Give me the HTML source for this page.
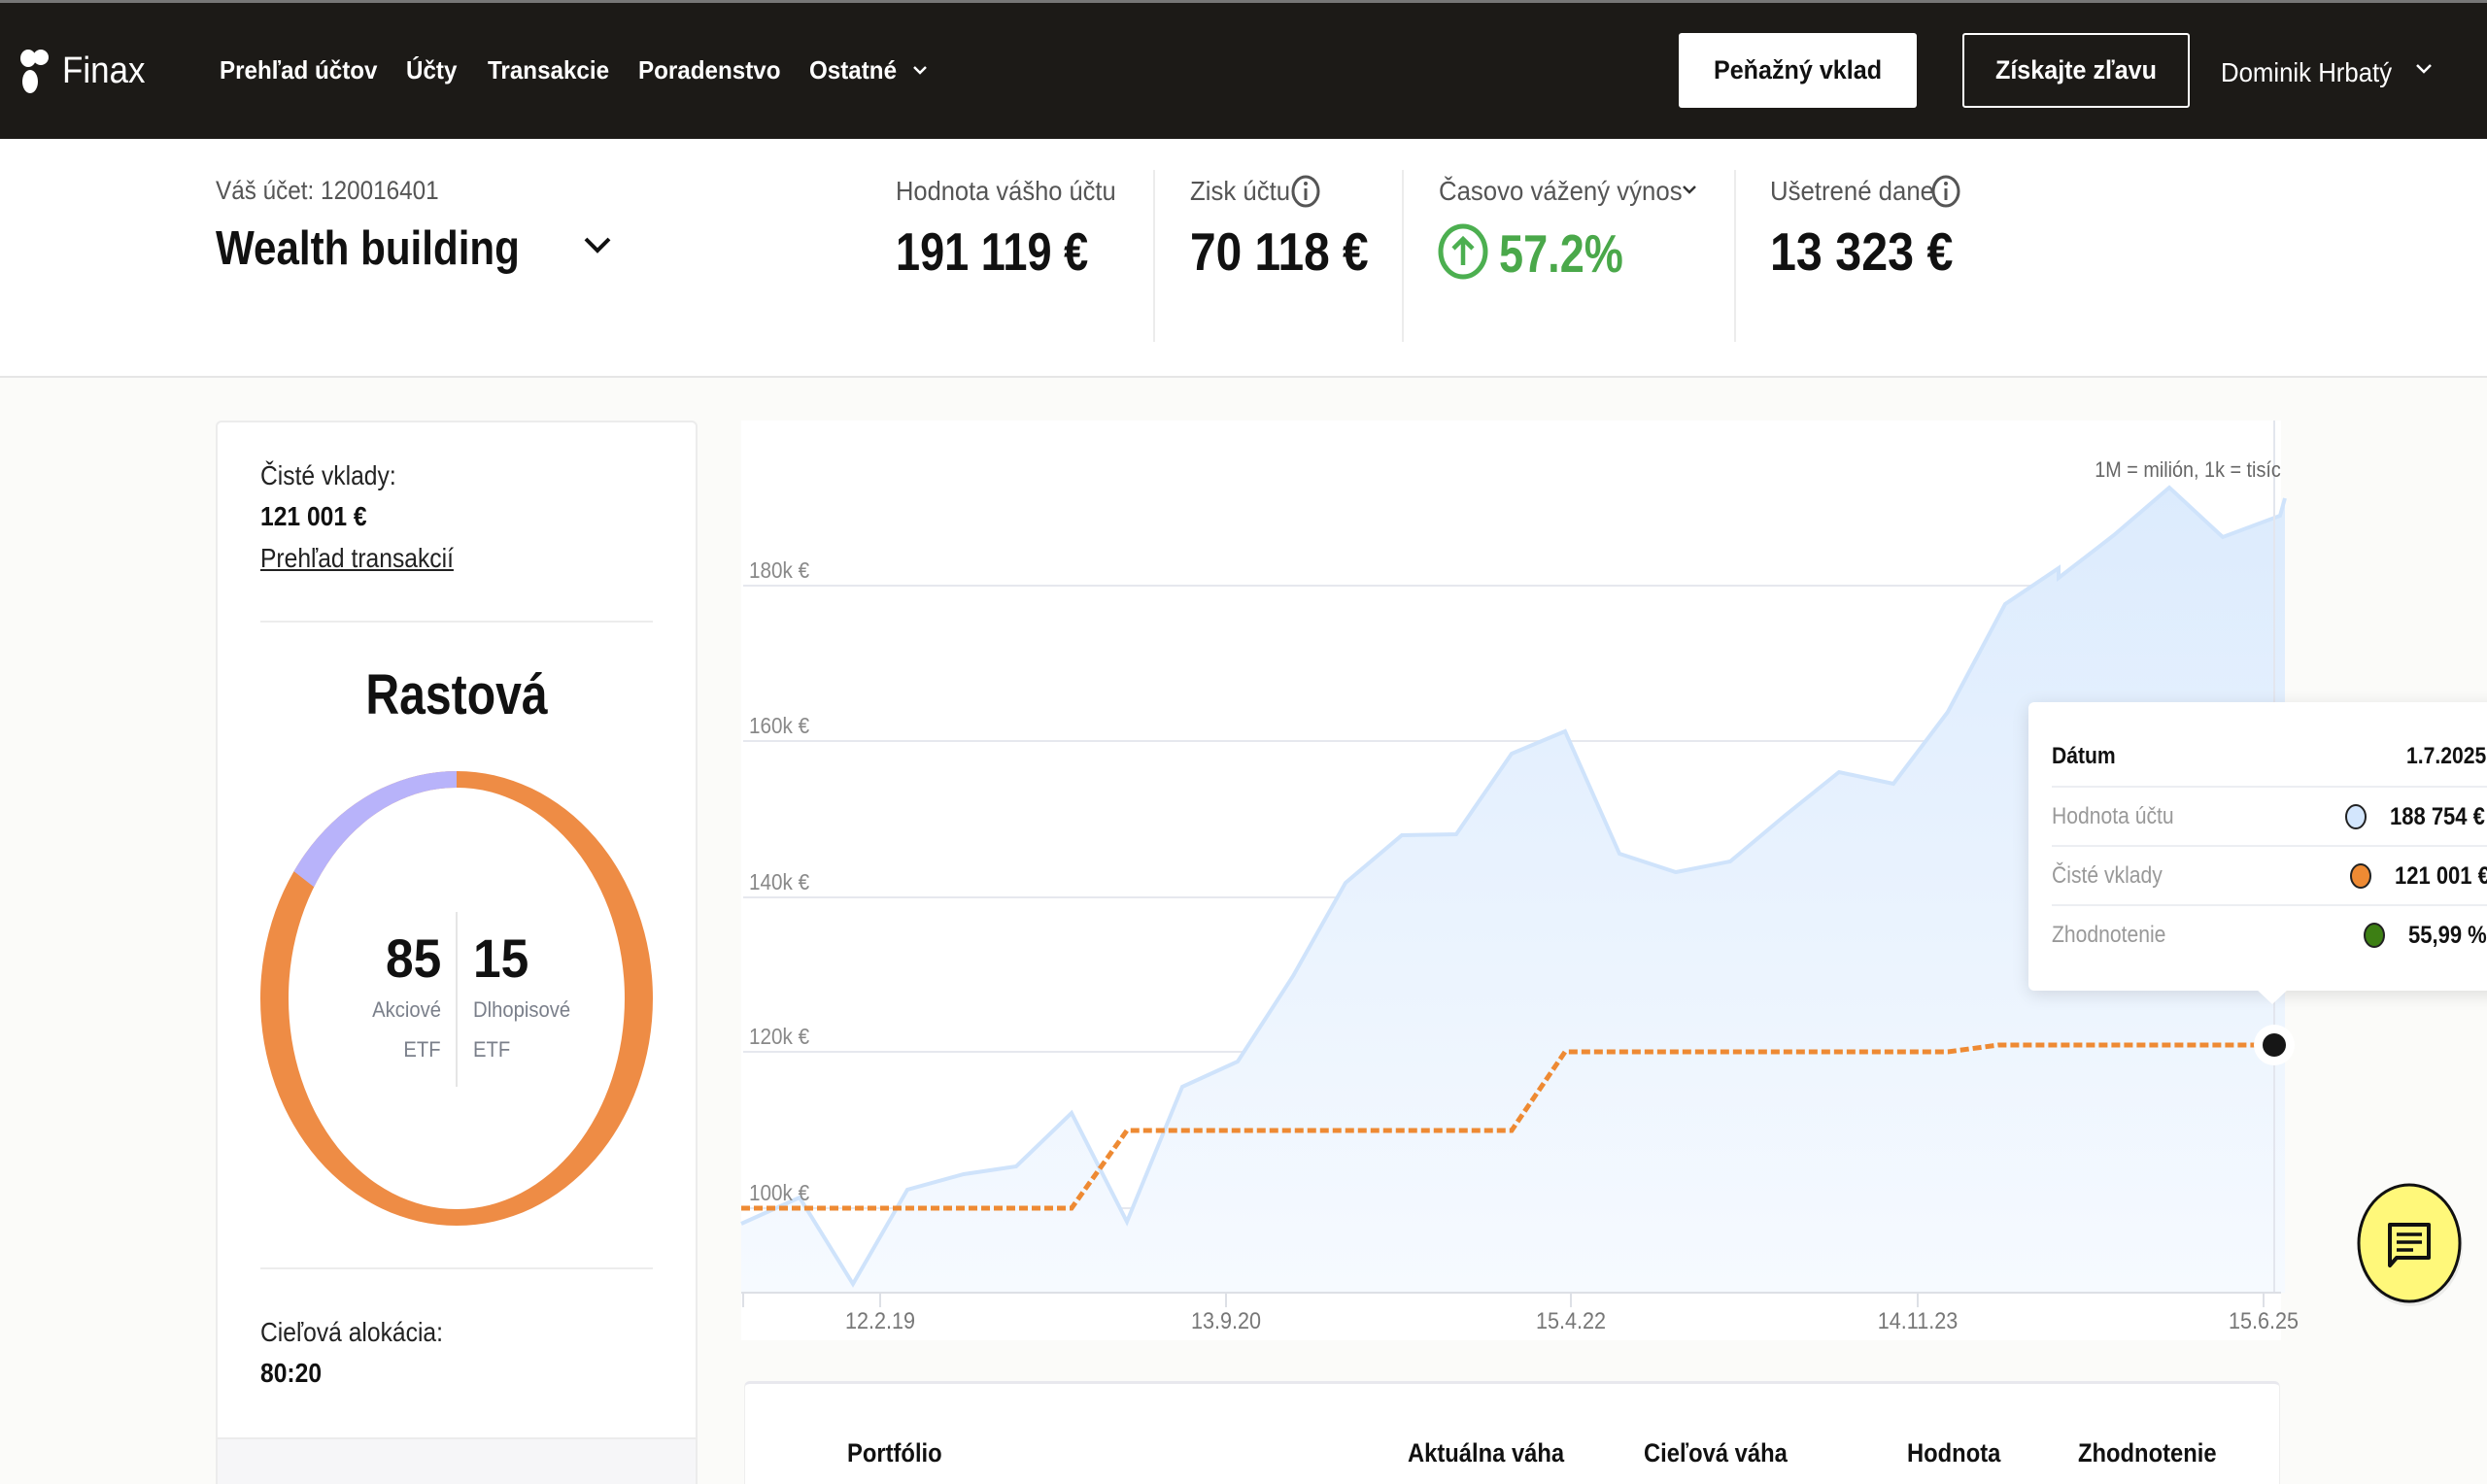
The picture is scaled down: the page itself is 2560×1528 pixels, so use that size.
<!DOCTYPE html>
<html><head><meta charset="utf-8"><style>
*{margin:0;padding:0;box-sizing:border-box}
html,body{width:2560px;height:1528px;overflow:hidden;background:#fbfbf9;font-family:"Liberation Sans",Arial,sans-serif;position:relative}
.t{position:absolute;white-space:nowrap;line-height:1;transform:scaleX(.9);transform-origin:0 50%}
.r{transform-origin:100% 50%}
.c{transform-origin:50% 50%}
.b{font-weight:bold}
.abs{position:absolute}
</style></head><body>
<!-- header -->
<div class="abs" style="left:0;top:0;width:2560px;height:143px;background:#1c1a17;border-top:3px solid #777"></div>
<svg class="abs" style="left:20px;top:50px" width="32" height="48" viewBox="0 0 32 48"><ellipse cx="9" cy="10" rx="8" ry="9" fill="#fff"/><ellipse cx="22" cy="9" rx="8" ry="8" fill="#fff"/><ellipse cx="11" cy="34" rx="8" ry="12" fill="#fff"/></svg>
<div class="t" style="left:64px;top:54px;font-size:38px;color:#fff;transform:scaleX(.92)">Finax</div>
<div class="t b" style="left:226px;top:59px;font-size:26px;color:#fff;transform:scaleX(.93)">Prehľad účtov</div>
<div class="t b" style="left:418px;top:59px;font-size:26px;color:#fff;transform:scaleX(.93)">Účty</div>
<div class="t b" style="left:502px;top:59px;font-size:26px;color:#fff;transform:scaleX(.93)">Transakcie</div>
<div class="t b" style="left:657px;top:59px;font-size:26px;color:#fff;transform:scaleX(.93)">Poradenstvo</div>
<div class="t b" style="left:833px;top:59px;font-size:26px;color:#fff;transform:scaleX(.93)">Ostatné</div>
<svg class="abs" style="left:939px;top:66px" width="16" height="12"><path d="M2 3l6 6 6-6" stroke="#fff" stroke-width="2.5" fill="none"/></svg>
<div class="abs" style="left:1728px;top:34px;width:245px;height:77px;background:#fff;border-radius:3px"></div>
<div class="t b c" style="left:1728px;width:245px;text-align:center;top:59px;font-size:27px;color:#111;transform:scaleX(.93)">Peňažný vklad</div>
<div class="abs" style="left:2020px;top:34px;width:234px;height:77px;border:2px solid #fff;border-radius:3px"></div>
<div class="t b c" style="left:2020px;width:234px;text-align:center;top:59px;font-size:27px;color:#fff;transform:scaleX(.93)">Získajte zľavu</div>
<div class="t" style="left:2286px;top:61px;font-size:28px;color:#fff;transform:scaleX(.92)">Dominik Hrbatý</div>
<svg class="abs" style="left:2486px;top:64px" width="18" height="14"><path d="M2 3l7 7 7-7" stroke="#fff" stroke-width="2.5" fill="none"/></svg>

<!-- account band -->
<div class="abs" style="left:0;top:143px;width:2560px;height:246px;background:#fff;border-bottom:2px solid #e6e6e6"></div>
<div class="t" style="left:222px;top:183px;font-size:27px;color:#555;transform:scaleX(.9)">Váš účet: 120016401</div>
<div class="t b" style="left:222px;top:232px;font-size:49px;color:#111;transform:scaleX(.86)">Wealth building</div>
<svg class="abs" style="left:600px;top:242px" width="30" height="22"><path d="M3 4l12 12 12-12" stroke="#111" stroke-width="4" fill="none"/></svg>
<div class="t" style="left:922px;top:183px;font-size:28px;color:#555;transform:scaleX(.91)">Hodnota vášho účtu</div>
<div class="t b" style="left:922px;top:232px;font-size:55px;color:#111;transform:scaleX(.82)">191 119 €</div>
<div class="abs" style="left:1187px;top:175px;width:2px;height:177px;background:#ececec"></div>
<div class="t" style="left:1225px;top:183px;font-size:28px;color:#555;transform:scaleX(.92)">Zisk účtu</div>
<svg class="abs" style="left:1328px;top:179px" width="32" height="36"><ellipse cx="16" cy="18" rx="13" ry="15" stroke="#555" stroke-width="3" fill="none"/><line x1="16" y1="15" x2="16" y2="27" stroke="#555" stroke-width="3"/><circle cx="16" cy="10" r="2" fill="#555"/></svg>
<div class="t b" style="left:1225px;top:232px;font-size:55px;color:#111;transform:scaleX(.87)">70 118 €</div>
<div class="abs" style="left:1443px;top:175px;width:2px;height:177px;background:#ececec"></div>
<div class="t" style="left:1481px;top:183px;font-size:28px;color:#555;transform:scaleX(.92)">Časovo vážený výnos</div>
<svg class="abs" style="left:1731px;top:190px" width="16" height="12"><path d="M2 2l6 6 6-6" stroke="#333" stroke-width="2.5" fill="none"/></svg>
<svg class="abs" style="left:1479px;top:229px" width="54" height="60"><ellipse cx="27" cy="30" rx="23" ry="26" stroke="#4caf50" stroke-width="5" fill="none"/><path d="M27 44V17M17 27l10-10 10 10" stroke="#4caf50" stroke-width="4.5" fill="none"/></svg>
<div class="t b" style="left:1543px;top:234px;font-size:55px;color:#4aa84a;transform:scaleX(.82)">57.2%</div>
<div class="abs" style="left:1785px;top:175px;width:2px;height:177px;background:#ececec"></div>
<div class="t" style="left:1822px;top:183px;font-size:28px;color:#555;transform:scaleX(.92)">Ušetrené dane</div>
<svg class="abs" style="left:1987px;top:179px" width="32" height="36"><ellipse cx="16" cy="18" rx="13" ry="15" stroke="#555" stroke-width="3" fill="none"/><line x1="16" y1="15" x2="16" y2="27" stroke="#555" stroke-width="3"/><circle cx="16" cy="10" r="2" fill="#555"/></svg>
<div class="t b" style="left:1822px;top:232px;font-size:55px;color:#111;transform:scaleX(.88)">13 323 €</div>

<!-- left card -->
<div class="abs" style="left:222px;top:433px;width:496px;height:1120px;background:#fff;border:2px solid #ececec;border-radius:6px"></div>
<div class="t" style="left:268px;top:476px;font-size:28px;color:#222;transform:scaleX(.88)">Čisté vklady:</div>
<div class="t b" style="left:268px;top:518px;font-size:28px;color:#111;transform:scaleX(.88)">121 001 €</div>
<div class="t" style="left:268px;top:561px;font-size:28px;color:#222;text-decoration:underline;transform:scaleX(.88)">Prehľad transakcií</div>
<div class="abs" style="left:268px;top:639px;width:404px;height:2px;background:#ececec"></div>
<div class="t b c" style="left:270px;width:400px;text-align:center;top:687px;font-size:58px;color:#111;transform:scaleX(.83)">Rastová</div>
<svg class="abs" style="left:0;top:0" width="740" height="1300">
<defs><clipPath id="pw"><polygon points="470,1028 470,700 150,700 150,778"/></clipPath></defs>
<path fill-rule="evenodd" fill="#ee8c45" d="M268,1028a202,234 0 1,0 404,0a202,234 0 1,0 -404,0ZM297,1028a173,217 0 1,0 346,0a173,217 0 1,0 -346,0Z"/>
<path clip-path="url(#pw)" fill-rule="evenodd" fill="#b8b3fa" d="M268,1028a202,234 0 1,0 404,0a202,234 0 1,0 -404,0ZM297,1028a173,217 0 1,0 346,0a173,217 0 1,0 -346,0Z"/>
<line x1="470" y1="939" x2="470" y2="1119" stroke="#e5e5e5" stroke-width="2"/>
</svg>
<div class="t b r" style="right:2106px;top:959px;font-size:56px;color:#111;transform:scaleX(.92)">85</div>
<div class="t b" style="left:487px;top:959px;font-size:56px;color:#111;transform:scaleX(.92)">15</div>
<div class="t r" style="right:2106px;top:1029px;font-size:22px;color:#7a7f8a;transform:scaleX(.92)">Akciové</div>
<div class="t r" style="right:2106px;top:1070px;font-size:22px;color:#7a7f8a;transform:scaleX(.92)">ETF</div>
<div class="t" style="left:487px;top:1029px;font-size:22px;color:#7a7f8a;transform:scaleX(.92)">Dlhopisové</div>
<div class="t" style="left:487px;top:1070px;font-size:22px;color:#7a7f8a;transform:scaleX(.92)">ETF</div>
<div class="abs" style="left:268px;top:1305px;width:404px;height:2px;background:#ececec"></div>
<div class="t" style="left:268px;top:1358px;font-size:28px;color:#222;transform:scaleX(.88)">Cieľová alokácia:</div>
<div class="t b" style="left:268px;top:1400px;font-size:28px;color:#111;transform:scaleX(.88)">80:20</div>
<div class="abs" style="left:224px;top:1480px;width:492px;height:60px;background:#f6f6f8;border-top:2px solid #ececec"></div>

<!-- chart -->
<div class="abs" style="left:763px;top:433px;width:1585px;height:947px;background:#fff"></div>
<svg class="abs" style="left:0;top:0" width="2560" height="1528">
<defs><linearGradient id="ag" x1="0" y1="0" x2="0" y2="1"><stop offset="0" stop-color="#dcebfd"/><stop offset="1" stop-color="#f6faff"/></linearGradient></defs>
<g stroke="#e6e8ee" stroke-width="2"><line x1="765" y1="603" x2="2348" y2="603"/><line x1="765" y1="763" x2="2348" y2="763"/><line x1="765" y1="924" x2="2348" y2="924"/><line x1="765" y1="1083" x2="2348" y2="1083"/><line x1="765" y1="1244" x2="2348" y2="1244"/></g>
<polygon fill="url(#ag)" points="763,1260 823,1233 878,1322 934,1225 992,1209 1046,1201 1103,1146 1160,1258 1217,1119 1274,1093 1331,1005 1385,909 1443,860 1499,859 1556,776 1611,753 1667,879 1725,898 1781,887 1837,840 1893,795 1949,807 2005,733 2064,622 2119,585 2119,595 2176,551 2233,502 2288,553 2347,531 2352,513 2352,1331 763,1331"/>
<polyline fill="none" stroke="#cfe3fb" stroke-width="4" points="763,1260 823,1233 878,1322 934,1225 992,1209 1046,1201 1103,1146 1160,1258 1217,1119 1274,1093 1331,1005 1385,909 1443,860 1499,859 1556,776 1611,753 1667,879 1725,898 1781,887 1837,840 1893,795 1949,807 2005,733 2064,622 2119,585 2119,595 2176,551 2233,502 2288,553 2347,531 2352,513"/>
<line x1="2341" y1="433" x2="2341" y2="1331" stroke="#e3e6ee" stroke-width="2"/>
<line x1="763" y1="1331" x2="2348" y2="1331" stroke="#dde0e6" stroke-width="2"/>
<g stroke="#dde0e6" stroke-width="2"><line x1="765" y1="1331" x2="765" y2="1346"/><line x1="906" y1="1331" x2="906" y2="1346"/><line x1="1262" y1="1331" x2="1262" y2="1346"/><line x1="1617" y1="1331" x2="1617" y2="1346"/><line x1="1974" y1="1331" x2="1974" y2="1346"/><line x1="2330" y1="1331" x2="2330" y2="1346"/></g>
<polyline fill="none" stroke="#ee8a33" stroke-width="5" stroke-dasharray="9,4" points="763,1244 1103,1244 1160,1164 1556,1164 1611,1083 2005,1083 2057,1076 2340,1076"/>
<circle cx="2341" cy="1076" r="21" fill="#fff"/><circle cx="2341" cy="1076" r="12" fill="#161616"/>
</svg>
<div class="t" style="left:771px;top:576px;font-size:23px;color:#888">180k €</div>
<div class="t" style="left:771px;top:736px;font-size:23px;color:#888">160k €</div>
<div class="t" style="left:771px;top:897px;font-size:23px;color:#888">140k €</div>
<div class="t" style="left:771px;top:1056px;font-size:23px;color:#888">120k €</div>
<div class="t" style="left:771px;top:1217px;font-size:23px;color:#888">100k €</div>
<div class="t r" style="right:212px;top:473px;font-size:22px;color:#666">1M = milión, 1k = tisíc</div>
<div class="t c" style="left:806px;width:200px;text-align:center;top:1349px;font-size:24px;color:#777">12.2.19</div>
<div class="t c" style="left:1162px;width:200px;text-align:center;top:1349px;font-size:24px;color:#777">13.9.20</div>
<div class="t c" style="left:1517px;width:200px;text-align:center;top:1349px;font-size:24px;color:#777">15.4.22</div>
<div class="t c" style="left:1874px;width:200px;text-align:center;top:1349px;font-size:24px;color:#777">14.11.23</div>
<div class="t c" style="left:2230px;width:200px;text-align:center;top:1349px;font-size:24px;color:#777">15.6.25</div>

<!-- tooltip -->
<div class="abs" style="left:2088px;top:723px;width:500px;height:297px;background:#fff;border-radius:6px;box-shadow:0 4px 18px rgba(0,0,0,.12)"></div>
<svg class="abs" style="left:2322px;top:1018px" width="34" height="18"><path d="M0 0L17 16 34 0Z" fill="#fff"/></svg>
<div class="t b" style="left:2112px;top:767px;font-size:24px;color:#111;transform:scaleX(.88)">Dátum</div>
<div class="t b" style="left:2477px;top:767px;font-size:24px;color:#111;transform:scaleX(.88)">1.7.2025</div>
<div class="abs" style="left:2112px;top:809px;width:460px;height:2px;background:#eceef2"></div>
<div class="abs" style="left:2112px;top:870px;width:460px;height:2px;background:#eceef2"></div>
<div class="abs" style="left:2112px;top:931px;width:460px;height:2px;background:#eceef2"></div>
<div class="t" style="left:2112px;top:829px;font-size:24px;color:#999;transform:scaleX(.88)">Hodnota účtu</div>
<div class="t" style="left:2112px;top:890px;font-size:24px;color:#999;transform:scaleX(.88)">Čisté vklady</div>
<div class="t" style="left:2112px;top:951px;font-size:24px;color:#999;transform:scaleX(.88)">Zhodnotenie</div>
<svg class="abs" style="left:2400px;top:820px" width="80" height="160"><ellipse cx="25" cy="21" rx="10" ry="12" fill="#d3e6fd" stroke="#222" stroke-width="2"/><ellipse cx="30" cy="82" rx="10" ry="12" fill="#ee8a33" stroke="#222" stroke-width="2"/><ellipse cx="44" cy="143" rx="10" ry="12" fill="#3d7f14" stroke="#222" stroke-width="2"/></svg>
<div class="t b" style="left:2460px;top:829px;font-size:25px;color:#111;transform:scaleX(.88)">188 754 €</div>
<div class="t b" style="left:2465px;top:890px;font-size:25px;color:#111;transform:scaleX(.88)">121 001 €</div>
<div class="t b" style="left:2479px;top:951px;font-size:25px;color:#111;transform:scaleX(.88)">55,99 %</div>

<!-- chat -->
<svg class="abs" style="left:2410px;top:1205px" width="140" height="150"><ellipse cx="71" cy="78" rx="54" ry="62" fill="rgba(0,0,0,.06)"/><ellipse cx="70" cy="75" rx="52" ry="60" fill="#fff87a" stroke="#111" stroke-width="3"/><path d="M50 56h40v34H57l-7 8z" fill="none" stroke="#111" stroke-width="4" stroke-linejoin="round"/><path d="M57 66h26M57 74h26M57 82h17" stroke="#111" stroke-width="3.5"/></svg>

<!-- bottom table card -->
<div class="abs" style="left:766px;top:1422px;width:1581px;height:140px;background:#fff;border-top:3px solid #e8e8ee;border-radius:6px;border-left:1px solid #eee;border-right:1px solid #eee"></div>
<div class="t b" style="left:872px;top:1483px;font-size:27px;color:#111;transform:scaleX(.88)">Portfólio</div>
<div class="t b" style="left:1449px;top:1483px;font-size:27px;color:#111;transform:scaleX(.88)">Aktuálna váha</div>
<div class="t b" style="left:1692px;top:1483px;font-size:27px;color:#111;transform:scaleX(.88)">Cieľová váha</div>
<div class="t b" style="left:1963px;top:1483px;font-size:27px;color:#111;transform:scaleX(.88)">Hodnota</div>
<div class="t b" style="left:2139px;top:1483px;font-size:27px;color:#111;transform:scaleX(.88)">Zhodnotenie</div>
</body></html>
